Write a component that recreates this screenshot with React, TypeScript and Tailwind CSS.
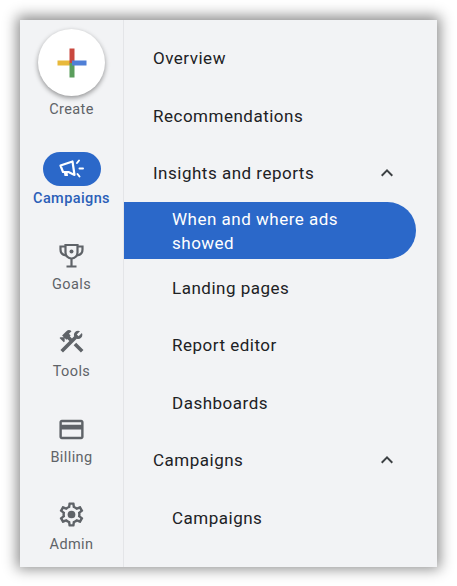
import { MdConstruction, MdExpandLess, MdOutlineCreditCard } from "react-icons/md";
import type { ReactNode } from "react";

const font = { fontFamily: '"Roboto", "Liberation Sans", sans-serif' };

function CreateButton() {
  return (
    <div className="flex flex-col items-center">
      <div className="flex h-[67px] w-[67px] items-center justify-center rounded-full bg-white shadow-[0_2px_5px_rgba(0,0,0,0.4)]">
        <svg width="30" height="30" viewBox="0 0 30 30">
          <rect x="0.5" y="12.5" width="15" height="5" fill="#e8b93b" />
          <rect x="12.5" y="0.5" width="5" height="15" fill="#c9483e" />
          <rect x="12.5" y="15" width="5" height="14.5" fill="#5a9e5c" />
          <rect x="15" y="12.5" width="14.5" height="5" fill="#4f7fd6" />
        </svg>
      </div>
      <span className="mt-[5px] text-[14.5px] leading-[17px] tracking-[0.4px] text-[#5f6368]">Create</span>
    </div>
  );
}

function CampaignIcon() {
  return (
    <svg width="25" height="20" viewBox="0 0 25 20" fill="none">
      <path d="M1.5 6.5 L13.5 2.5 L15.5 16 L9.5 13 L4 13 Z" stroke="#fff" strokeWidth="2.2" strokeLinejoin="round" />
      <path d="M4.5 12 L5.5 17 H9 L8.5 12.5 Z" fill="#fff" />
      <path d="M18 4 L20 1.5 M20.5 9.5 H24 M18.5 15 L20.5 17.5" stroke="#fff" strokeWidth="2" strokeLinecap="round" />
    </svg>
  );
}

function TrophyIcon() {
  return (
    <svg width="25" height="25" viewBox="0 0 25 25" fill="none" stroke="currentColor" strokeWidth="2.2" className="mb-[1px]">
      <path d="M6.5 2h12v7.5a6 6 0 0 1-12 0z" />
      <path d="M6.5 3.5H1.5V6.5C1.5 9.5 3.5 12 7 12.5M18.5 3.5H23.5V6.5C23.5 9.5 21.5 12 18 12.5" />
      <path d="M12.5 16v7M7.5 23.5h10" />
      <circle cx="12.5" cy="8.5" r="2" fill="currentColor" stroke="none" />
    </svg>
  );
}

function GearIcon() {
  return (
    <svg width="29" height="29" viewBox="0 0 24 24" fill="currentColor" className="mb-[3px]">
      <path d="M19.43 12.98c.04-.32.07-.64.07-.98 0-.34-.03-.66-.07-.98l2.11-1.65c.19-.15.24-.42.12-.64l-2-3.46c-.09-.16-.26-.25-.44-.25-.06 0-.12.01-.17.03l-2.49 1c-.52-.4-1.08-.73-1.69-.98l-.38-2.65C14.46 2.18 14.25 2 14 2h-4c-.25 0-.46.18-.49.42l-.38 2.65c-.61.25-1.17.59-1.69.98l-2.49-1c-.06-.02-.12-.03-.18-.03-.17 0-.34.09-.43.25l-2 3.46c-.13.22-.07.49.12.64l2.11 1.65c-.04.32-.07.65-.07.98 0 .33.03.66.07.98l-2.11 1.65c-.19.15-.24.42-.12.64l2 3.46c.09.16.26.25.44.25.06 0 .12-.01.17-.03l2.49-1c.52.4 1.08.73 1.69.98l.38 2.65c.03.24.24.42.49.42h4c.25 0 .46-.18.49-.42l.38-2.65c.61-.25 1.17-.59 1.69-.98l2.49 1c.06.02.12.03.18.03.17 0 .34-.09.43-.25l2-3.46c.12-.22.07-.49-.12-.64l-2.11-1.65zm-1.98-1.71c.04.31.05.52.05.73 0 .21-.02.43-.05.73l-.14 1.13.89.7 1.08.84-.7 1.21-1.27-.51-1.04-.42-.9.68c-.43.32-.84.56-1.25.73l-1.06.43-.16 1.13-.2 1.35h-1.4l-.19-1.35-.16-1.13-1.06-.43c-.43-.18-.83-.41-1.23-.71l-.91-.7-1.06.43-1.27.51-.7-1.21 1.08-.84.89-.7-.14-1.13c-.03-.31-.05-.54-.05-.74s.02-.43.05-.73l.14-1.13-.89-.7-1.08-.84.7-1.21 1.27.51 1.04.42.9-.68c.43-.32.84-.56 1.25-.73l1.06-.43.16-1.13.2-1.35h1.39l.19 1.35.16 1.13 1.06.43c.43.18.83.41 1.23.71l.91.7 1.06-.43 1.27-.51.7 1.21-1.07.85-.89.7.14 1.13z" />
      <circle cx="12" cy="12" r="3.2" />
    </svg>
  );
}

function RailItem({ icon, label }: { icon: ReactNode; label: string }) {
  return (
    <div className="flex flex-col items-center">
      <div className="flex h-[34px] items-center justify-center text-[#5f6368]">{icon}</div>
      <span className="mt-[3px] text-[14.5px] leading-[17px] tracking-[0.4px] text-[#5f6368]">{label}</span>
    </div>
  );
}

function MenuRow({ label, nested, open }: { label: string; nested?: boolean; open?: boolean }) {
  return (
    <div className={`flex h-[57.5px] items-center justify-between pr-[38px] text-[#202124] ${nested ? "pl-[48px]" : "pl-[29px]"}`}>
      <span className="text-[17px] leading-[24px] tracking-[0.5px]">{label}</span>
      {open && <MdExpandLess size={24} className="text-[#3c4043]" />}
    </div>
  );
}

export default function App() {
  return (
    <div className="h-[586px] w-[457px] overflow-hidden bg-white pt-[20px] pl-[20px]" style={font}>
      <div className="flex h-[547px] w-[417px] overflow-hidden bg-[#f2f3f5] shadow-[0_-1px_13px_3px_rgba(0,0,0,0.45)]">
        <div className="flex w-[104px] shrink-0 flex-col items-center border-r border-[#e4e5e8] pt-[9px]">
          <CreateButton />
          <div className="mt-[34px] flex flex-col items-center">
            <div className="flex h-[34px] w-[58px] items-center justify-center rounded-full bg-[#2b68c9]">
              <CampaignIcon />
            </div>
            <span className="mt-[4px] text-[14.5px] leading-[17px] tracking-[0.4px] font-medium text-[#2b5fb8]">Campaigns</span>
          </div>
          <div className="mt-[32px] flex flex-col gap-[32.6px]">
            <RailItem icon={<TrophyIcon />} label="Goals" />
            <RailItem icon={<MdConstruction size={29} className="mb-[3px]" />} label="Tools" />
            <RailItem icon={<MdOutlineCreditCard size={29} />} label="Billing" />
            <RailItem icon={<GearIcon />} label="Admin" />
          </div>
        </div>
        <div className="flex-1 pt-[9.6px]">
          <MenuRow label="Overview" />
          <MenuRow label="Recommendations" />
          <MenuRow label="Insights and reports" open />
          <div className="mr-[21px] rounded-r-[29px] bg-[#2b68c9] py-[4.5px] pl-[48px] text-[17px] leading-[24px] tracking-[0.5px] text-white">
            When and where ads
            <br />
            showed
          </div>
          <MenuRow label="Landing pages" nested />
          <MenuRow label="Report editor" nested />
          <MenuRow label="Dashboards" nested />
          <MenuRow label="Campaigns" open />
          <MenuRow label="Campaigns" nested />
        </div>
      </div>
    </div>
  );
}
